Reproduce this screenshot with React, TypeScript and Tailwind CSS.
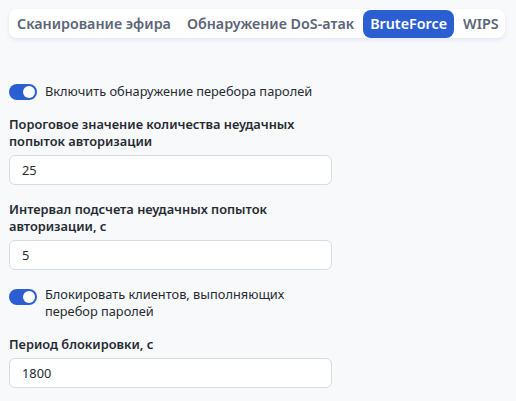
import React, { useState } from 'react';

const tabs = ['Сканирование эфира', 'Обнаружение DoS-атак', 'BruteForce', 'WIPS'];

function Toggle({ on }: { on: boolean }) {
    return (
        <span
            className={`relative inline-flex h-4 w-7 shrink-0 items-center rounded-full ${on ? 'bg-[#2b5fd1]' : 'bg-gray-300'}`}
        >
            <span
                className={`absolute h-3 w-3 rounded-full bg-white ${on ? 'left-[14px]' : 'left-[2px]'}`}
            />
        </span>
    );
}

function Field({ label, value }: { label: string; value: string }) {
    return (
        <div className="flex flex-col">
            <label className="w-[320px] text-[12.8px] font-semibold leading-[17px] text-[#262b33]">{label}</label>
            <input
                defaultValue={value}
                className="mt-[5px] h-[30px] w-[323px] rounded-md border border-[#d7dbe2] bg-white px-3 text-[12.8px] text-[#262b33] outline-none"
            />
        </div>
    );
}

export default function App() {
    const [active] = useState('BruteForce');

    return (
        <div className="h-[401px] w-[516px] overflow-hidden bg-[#f8f9fb] px-[9px] pt-[9px]" style={{ fontFamily: '"Noto Sans", sans-serif' }}>
            <div className="flex h-[29px] w-[496px] items-center gap-[2px] rounded-lg bg-white pl-[1px] shadow-[0_2px_4px_rgba(200,210,235,0.45)]">
                {tabs.map((t) => (
                    <div
                        key={t}
                        className={`flex h-[28px] items-center whitespace-nowrap rounded-lg px-[7px] text-[14.3px] font-semibold ${
                            t === active ? 'bg-[#2b5fd1] text-white' : 'text-[#5b6577]'
                        }`}
                    >
                        {t}
                    </div>
                ))}
            </div>

            <div className="mt-[45px] flex items-center gap-2">
                <Toggle on />
                <span className="text-[12.8px] leading-[17px] text-[#262b33]">Включить обнаружение перебора паролей</span>
            </div>

            <div className="mt-[16px]">
                <Field label="Пороговое значение количества неудачных попыток авторизации" value="25" />
            </div>
            <div className="mt-[16px]">
                <Field label="Интервал подсчета неудачных попыток авторизации, с" value="5" />
            </div>

            <div className="mt-[16px] flex items-start gap-2">
                <span className="mt-[1px]">
                    <Toggle on />
                </span>
                <span className="w-[260px] text-[12.8px] leading-[17px] text-[#262b33]">
                    Блокировать клиентов, выполняющих перебор паролей
                </span>
            </div>

            <div className="mt-[16px]">
                <Field label="Период блокировки, с" value="1800" />
            </div>
        </div>
    );
}
